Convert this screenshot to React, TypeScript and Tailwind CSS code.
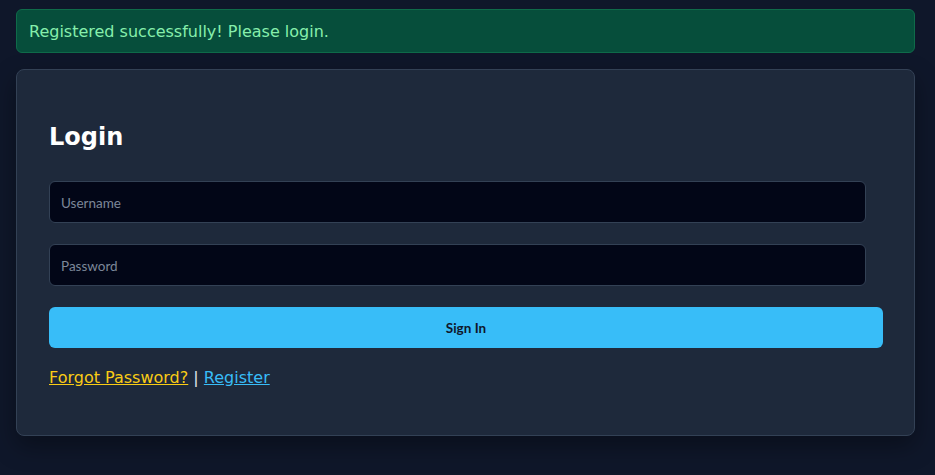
export default function App() {
  return (
    <div className="min-h-screen bg-[#0f172a] pl-4 pr-5 pt-[9px] pb-10 font-['DejaVu_Sans',sans-serif]">
      <div className="h-[44px] flex items-center rounded-md border border-[#0f6b4a] bg-[#064e3b] px-3 pt-[2px] text-base text-[#86efac]">
        Registered successfully! Please login.
      </div>

      <div className="mt-4 rounded-lg border border-[#334155] bg-[#1e293b] pl-8 pr-[31px] pt-[51px] pb-[45px] shadow-[0_10px_25px_rgba(0,0,0,0.35)]">
        <h2 className="text-2xl font-bold leading-8 text-white">Login</h2>

        <form className="mt-[28px] flex flex-col" onSubmit={(e) => e.preventDefault()}>
          <input
            type="text"
            placeholder="Username"
            className="h-[42px] w-[calc(100%-17px)] rounded-md border border-[#334155] bg-[#020617] px-[11px] pt-[1px] text-[13.5px] text-white placeholder:text-[#7c8799] outline-none font-['Lato',sans-serif]"
          />
          <input
            type="password"
            placeholder="Password"
            className="mt-[21px] h-[42px] w-[calc(100%-17px)] rounded-md border border-[#334155] bg-[#020617] px-[11px] pt-[1px] text-[13.5px] text-white placeholder:text-[#7c8799] outline-none font-['Lato',sans-serif]"
          />
          <button
            type="submit"
            className="mt-[21px] h-[41px] w-full rounded-md bg-[#38bdf8] pt-[1px] text-[13.5px] font-bold text-[#0f172a] font-['Lato',sans-serif]"
          >
            Sign In
          </button>
        </form>

        <p className="mt-[18px] text-base leading-6 text-[#e2e8f0]">
          <a href="#" className="text-[#facc15] underline">
            Forgot Password?
          </a>{" "}
          |{" "}
          <a href="#" className="text-[#38bdf8] underline">
            Register
          </a>
        </p>
      </div>
    </div>
  );
}
